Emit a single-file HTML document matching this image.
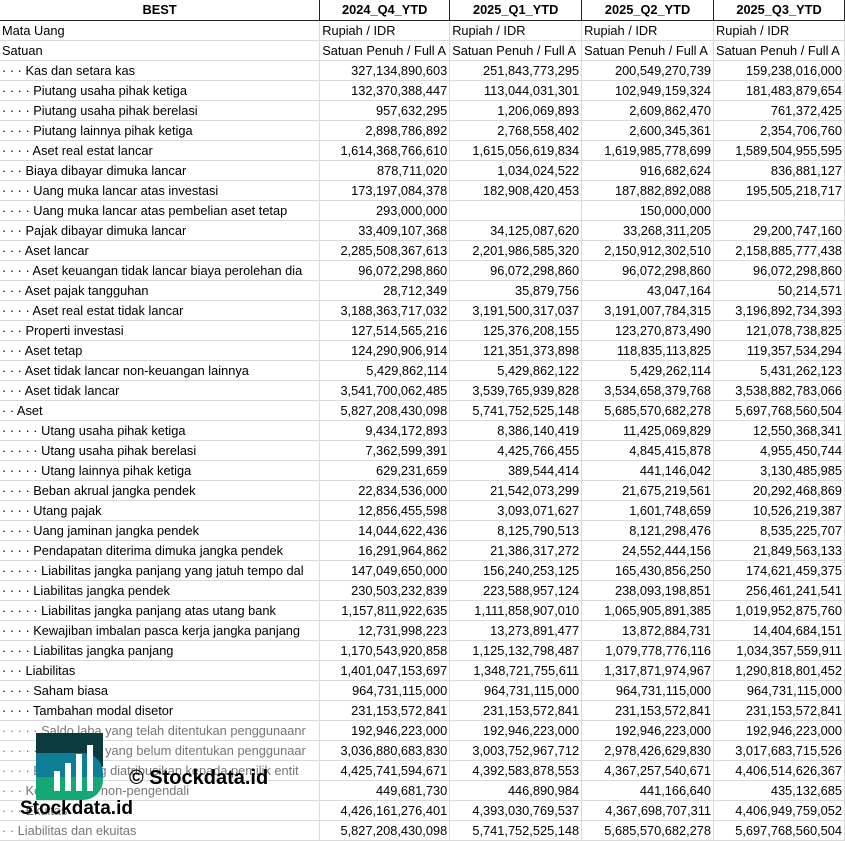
<!DOCTYPE html>
<html><head><meta charset="utf-8"><style>
body{margin:0;width:845px;height:841px;overflow:hidden;background:#fff;font-family:"Liberation Sans",Arial,sans-serif;font-size:12.8px;color:#000}
table{border-collapse:collapse;table-layout:fixed;position:absolute;left:0;top:0}
td{height:18px;padding:1px 2px 0 2px;border:1px solid #dadada;white-space:nowrap;overflow:hidden;text-align:right;line-height:18px;vertical-align:middle;box-sizing:content-box}
td:first-child{text-align:left;border-left:none}
tr.h td{font-weight:bold;text-align:center;border:1px solid #222;border-top:none;height:20px;line-height:20px;padding:0 2px}
tr.h td:first-child{border-left:none}
tr.t td{text-align:left}
.g{color:#777}
.wm{position:absolute;font-weight:bold;color:#000;font-family:"Liberation Sans",sans-serif}
</style></head><body>
<table>
<colgroup><col style="width:320px"><col style="width:130px"><col style="width:132px"><col style="width:132px"><col style="width:131px"></colgroup>
<tr class="h"><td>BEST</td><td>2024_Q4_YTD</td><td>2025_Q1_YTD</td><td>2025_Q2_YTD</td><td>2025_Q3_YTD</td></tr>
<tr class="t"><td>Mata Uang</td><td>Rupiah / IDR</td><td>Rupiah / IDR</td><td>Rupiah / IDR</td><td>Rupiah / IDR</td></tr>
<tr class="t"><td>Satuan</td><td>Satuan Penuh / Full A</td><td>Satuan Penuh / Full A</td><td>Satuan Penuh / Full A</td><td>Satuan Penuh / Full A</td></tr>
<tr><td>· · · Kas dan setara kas</td><td>327,134,890,603</td><td>251,843,773,295</td><td>200,549,270,739</td><td>159,238,016,000</td></tr>
<tr><td>· · · · Piutang usaha pihak ketiga</td><td>132,370,388,447</td><td>113,044,031,301</td><td>102,949,159,324</td><td>181,483,879,654</td></tr>
<tr><td>· · · · Piutang usaha pihak berelasi</td><td>957,632,295</td><td>1,206,069,893</td><td>2,609,862,470</td><td>761,372,425</td></tr>
<tr><td>· · · · Piutang lainnya pihak ketiga</td><td>2,898,786,892</td><td>2,768,558,402</td><td>2,600,345,361</td><td>2,354,706,760</td></tr>
<tr><td>· · · · Aset real estat lancar</td><td>1,614,368,766,610</td><td>1,615,056,619,834</td><td>1,619,985,778,699</td><td>1,589,504,955,595</td></tr>
<tr><td>· · · Biaya dibayar dimuka lancar</td><td>878,711,020</td><td>1,034,024,522</td><td>916,682,624</td><td>836,881,127</td></tr>
<tr><td>· · · · Uang muka lancar atas investasi</td><td>173,197,084,378</td><td>182,908,420,453</td><td>187,882,892,088</td><td>195,505,218,717</td></tr>
<tr><td>· · · · Uang muka lancar atas pembelian aset tetap</td><td>293,000,000</td><td></td><td>150,000,000</td><td></td></tr>
<tr><td>· · · Pajak dibayar dimuka lancar</td><td>33,409,107,368</td><td>34,125,087,620</td><td>33,268,311,205</td><td>29,200,747,160</td></tr>
<tr><td>· · · Aset lancar</td><td>2,285,508,367,613</td><td>2,201,986,585,320</td><td>2,150,912,302,510</td><td>2,158,885,777,438</td></tr>
<tr><td>· · · · Aset keuangan tidak lancar biaya perolehan dia</td><td>96,072,298,860</td><td>96,072,298,860</td><td>96,072,298,860</td><td>96,072,298,860</td></tr>
<tr><td>· · · Aset pajak tangguhan</td><td>28,712,349</td><td>35,879,756</td><td>43,047,164</td><td>50,214,571</td></tr>
<tr><td>· · · · Aset real estat tidak lancar</td><td>3,188,363,717,032</td><td>3,191,500,317,037</td><td>3,191,007,784,315</td><td>3,196,892,734,393</td></tr>
<tr><td>· · · Properti investasi</td><td>127,514,565,216</td><td>125,376,208,155</td><td>123,270,873,490</td><td>121,078,738,825</td></tr>
<tr><td>· · · Aset tetap</td><td>124,290,906,914</td><td>121,351,373,898</td><td>118,835,113,825</td><td>119,357,534,294</td></tr>
<tr><td>· · · Aset tidak lancar non-keuangan lainnya</td><td>5,429,862,114</td><td>5,429,862,122</td><td>5,429,262,114</td><td>5,431,262,123</td></tr>
<tr><td>· · · Aset tidak lancar</td><td>3,541,700,062,485</td><td>3,539,765,939,828</td><td>3,534,658,379,768</td><td>3,538,882,783,066</td></tr>
<tr><td>· · Aset</td><td>5,827,208,430,098</td><td>5,741,752,525,148</td><td>5,685,570,682,278</td><td>5,697,768,560,504</td></tr>
<tr><td>· · · · · Utang usaha pihak ketiga</td><td>9,434,172,893</td><td>8,386,140,419</td><td>11,425,069,829</td><td>12,550,368,341</td></tr>
<tr><td>· · · · · Utang usaha pihak berelasi</td><td>7,362,599,391</td><td>4,425,766,455</td><td>4,845,415,878</td><td>4,955,450,744</td></tr>
<tr><td>· · · · · Utang lainnya pihak ketiga</td><td>629,231,659</td><td>389,544,414</td><td>441,146,042</td><td>3,130,485,985</td></tr>
<tr><td>· · · · Beban akrual jangka pendek</td><td>22,834,536,000</td><td>21,542,073,299</td><td>21,675,219,561</td><td>20,292,468,869</td></tr>
<tr><td>· · · · Utang pajak</td><td>12,856,455,598</td><td>3,093,071,627</td><td>1,601,748,659</td><td>10,526,219,387</td></tr>
<tr><td>· · · · Uang jaminan jangka pendek</td><td>14,044,622,436</td><td>8,125,790,513</td><td>8,121,298,476</td><td>8,535,225,707</td></tr>
<tr><td>· · · · Pendapatan diterima dimuka jangka pendek</td><td>16,291,964,862</td><td>21,386,317,272</td><td>24,552,444,156</td><td>21,849,563,133</td></tr>
<tr><td>· · · · · Liabilitas jangka panjang yang jatuh tempo dal</td><td>147,049,650,000</td><td>156,240,253,125</td><td>165,430,856,250</td><td>174,621,459,375</td></tr>
<tr><td>· · · · Liabilitas jangka pendek</td><td>230,503,232,839</td><td>223,588,957,124</td><td>238,093,198,851</td><td>256,461,241,541</td></tr>
<tr><td>· · · · · Liabilitas jangka panjang atas utang bank</td><td>1,157,811,922,635</td><td>1,111,858,907,010</td><td>1,065,905,891,385</td><td>1,019,952,875,760</td></tr>
<tr><td>· · · · Kewajiban imbalan pasca kerja jangka panjang</td><td>12,731,998,223</td><td>13,273,891,477</td><td>13,872,884,731</td><td>14,404,684,151</td></tr>
<tr><td>· · · · Liabilitas jangka panjang</td><td>1,170,543,920,858</td><td>1,125,132,798,487</td><td>1,079,778,776,116</td><td>1,034,357,559,911</td></tr>
<tr><td>· · · Liabilitas</td><td>1,401,047,153,697</td><td>1,348,721,755,611</td><td>1,317,871,974,967</td><td>1,290,818,801,452</td></tr>
<tr><td>· · · · Saham biasa</td><td>964,731,115,000</td><td>964,731,115,000</td><td>964,731,115,000</td><td>964,731,115,000</td></tr>
<tr><td>· · · · Tambahan modal disetor</td><td>231,153,572,841</td><td>231,153,572,841</td><td>231,153,572,841</td><td>231,153,572,841</td></tr>
<tr><td class="g">· · · · · Saldo laba yang telah ditentukan penggunaanr</td><td>192,946,223,000</td><td>192,946,223,000</td><td>192,946,223,000</td><td>192,946,223,000</td></tr>
<tr><td class="g">· · · · · Saldo laba yang belum ditentukan penggunaar</td><td>3,036,880,683,830</td><td>3,003,752,967,712</td><td>2,978,426,629,830</td><td>3,017,683,715,526</td></tr>
<tr><td class="g">· · · · Ekuitas yang diatribusikan kepada pemilik entit</td><td>4,425,741,594,671</td><td>4,392,583,878,553</td><td>4,367,257,540,671</td><td>4,406,514,626,367</td></tr>
<tr><td class="g">· · · Kepentingan non-pengendali</td><td>449,681,730</td><td>446,890,984</td><td>441,166,640</td><td>435,132,685</td></tr>
<tr><td class="g">· · · Ekuitas</td><td>4,426,161,276,401</td><td>4,393,030,769,537</td><td>4,367,698,707,311</td><td>4,406,949,759,052</td></tr>
<tr><td class="g">· · Liabilitas dan ekuitas</td><td>5,827,208,430,098</td><td>5,741,752,525,148</td><td>5,685,570,682,278</td><td>5,697,768,560,504</td></tr>
</table>
<svg style="position:absolute;left:36px;top:733px" width="67" height="67" viewBox="0 0 67 67">
<path d="M0 0H67V34H0Z" fill="#0c3b3f"/>
<path d="M0 20H47A20 20 0 0 1 67 40V44H0Z" fill="#0e7e96"/>
<path d="M0 44H67V47A20 20 0 0 1 47 67H0Z" fill="#13a874"/>
<rect x="18" y="38" width="6" height="20" fill="#fff"/><rect x="29" y="30" width="6" height="28" fill="#fff"/><rect x="40" y="21" width="6" height="37" fill="#fff"/><rect x="51" y="12" width="6" height="46" fill="#fff"/>
</svg>
<div class="wm" style="left:129px;top:767px;font-size:20px">© Stockdata.id</div>
<div class="wm" style="left:20px;top:798px;font-size:19px">Stockdata.id</div>
</body></html>
